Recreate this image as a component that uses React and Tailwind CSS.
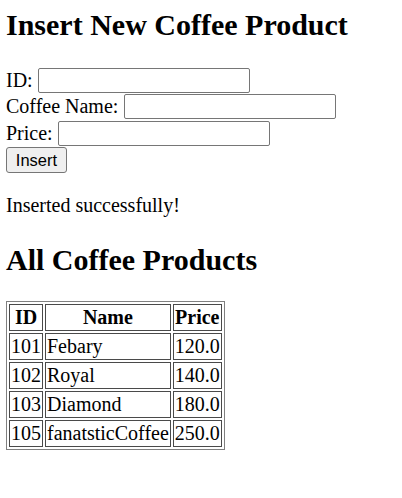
const products = [
  { id: 101, name: 'Febary', price: '120.0' },
  { id: 102, name: 'Royal', price: '140.0' },
  { id: 103, name: 'Diamond', price: '180.0' },
  { id: 105, name: 'fanatsticCoffee', price: '250.0' },
];

function Field({ label }) {
  return (
    <div className="flex h-[26.5px] items-center">
      <label className="leading-[23px]">{label}</label>
      <input
        type="text"
        className="ml-[5.5px] h-[25px] w-[212px] rounded-[2px] border border-[#767676] bg-white px-[2px] text-[16px] outline-none"
      />
    </div>
  );
}

export default function App() {
  return (
    <div className="min-h-[498px] bg-white px-[6px] pt-[8px] text-[20px] text-black font-['Liberation_Serif',serif]">
      <h1 className="mb-[25px] text-[30px] font-bold leading-[34px]">Insert New Coffee Product</h1>

      <form onSubmit={(e) => e.preventDefault()}>
        <Field label="ID:" />
        <Field label="Coffee Name:" />
        <Field label="Price:" />
        <button
          type="submit"
          className="mt-[0.5px] block h-[26px] w-[61px] rounded-[3px] border border-[#767676] bg-[#efefef] text-[16.5px] font-['Liberation_Sans',sans-serif]"
        >
          Insert
        </button>
      </form>

      <p className="mt-[21px] leading-[23px]">Inserted successfully!</p>

      <h2 className="mt-[26px] text-[30px] font-bold leading-[34px]">All Coffee Products</h2>

      <table className="mt-[24px] border-separate border-spacing-[2px] border border-[#808080]">
        <thead>
          <tr>
            <th className="border border-[#4a4a4a] p-[1px] leading-[23px]">ID</th>
            <th className="border border-[#4a4a4a] p-[1px] leading-[23px]">Name</th>
            <th className="border border-[#4a4a4a] p-[1px] leading-[23px]">Price</th>
          </tr>
        </thead>
        <tbody>
          {products.map((p) => (
            <tr key={p.id}>
              <td className="border border-[#4a4a4a] p-[1px] leading-[23px]">{p.id}</td>
              <td className="border border-[#4a4a4a] p-[1px] leading-[23px]">{p.name}</td>
              <td className="border border-[#4a4a4a] p-[1px] leading-[23px]">{p.price}</td>
            </tr>
          ))}
        </tbody>
      </table>
    </div>
  );
}
